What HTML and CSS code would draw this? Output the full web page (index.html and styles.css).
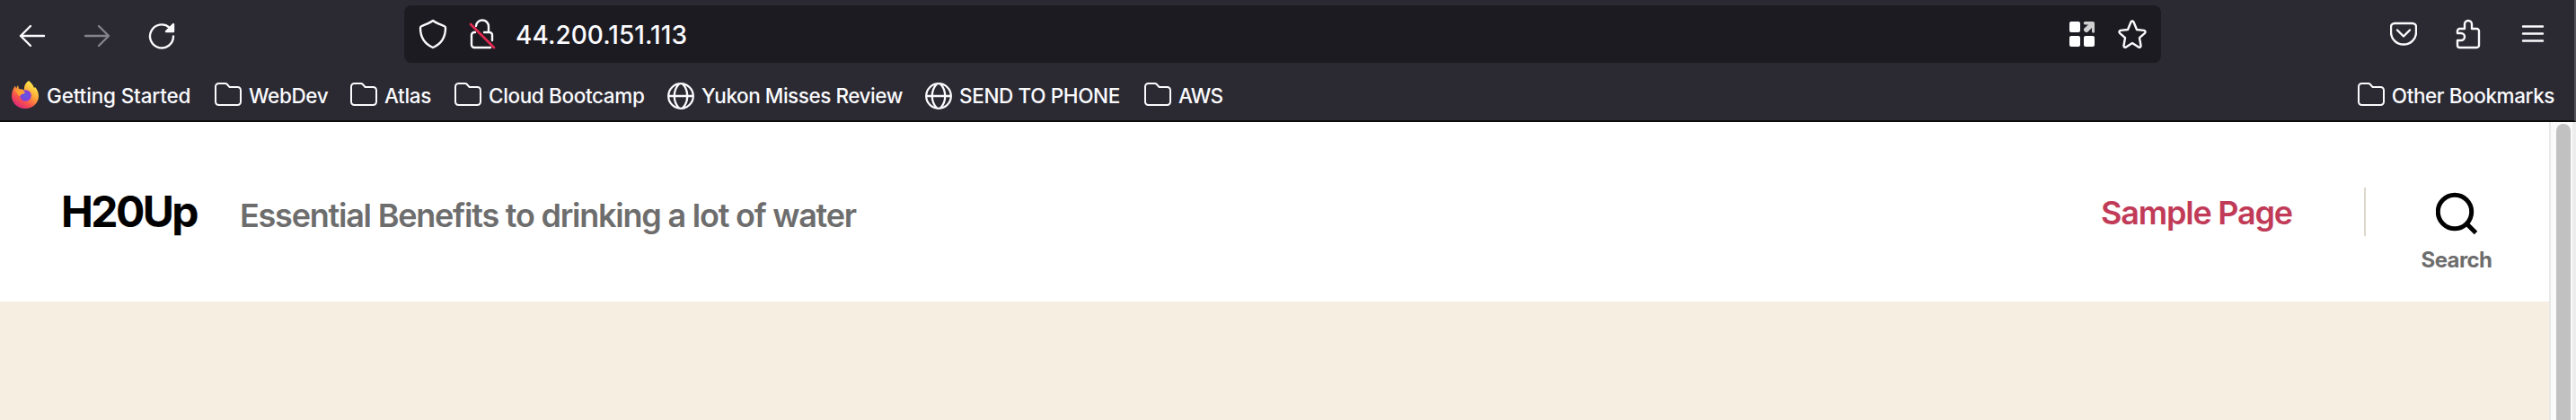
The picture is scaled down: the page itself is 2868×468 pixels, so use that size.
FILE: index.html
```html
<!DOCTYPE html>
<html lang="en">
<head>
<meta charset="utf-8">
<title>H20Up</title>
<link rel="stylesheet" href="styles.css">
</head>
<body>
<svg class="defs" width="0" height="0" aria-hidden="true">
  <symbol id="folder" viewBox="0 0 30 26"><path d="M1 4.500a3.500 3.500 0 0 1 3.500-3.500h7.200a3 3 0 0 1 2.200 1l2.600 3h9a3.500 3.500 0 0 1 3.500 3.500v13a3.500 3.500 0 0 1-3.500 3.500h-21A3.500 3.500 0 0 1 1 21.500z" fill="none" stroke="currentColor" stroke-width="2"/></symbol>
  <symbol id="globe" viewBox="0 0 30 30"><g fill="none" stroke="currentColor" stroke-width="2.300"><circle cx="15" cy="15" r="13.800"/><path d="M1 15h28M13 1.500C6 9 6 21 13 28.500M17 1.500C24 9 24 21 17 28.500"/></g></symbol>
</svg>
<header class="browser">
  <div class="toolbar">
    <nav class="history">
      <svg class="back" width="30" height="26" viewBox="0 0 30 26"><path d="M13 2 2 13l11 11M2 13h26" /></svg>
      <svg class="forward" width="30" height="26" viewBox="0 0 30 26"><path d="M17 2l11 11-11 11M28 13H2" /></svg>
      <svg class="reload" width="30" height="30" viewBox="0 0 30 30"><path d="M23.500 5.600A13 13 0 1 0 28 15.500"/><path d="M28 2v8H20z" fill="currentColor"/></svg>
    </nav>
    <div class="urlbar">
      <svg class="shield" width="32" height="34" viewBox="0 0 32 34"><path d="M16 2C12 5 7 6.500 3.500 8 2.500 8.500 2 9 2 10c0 8 2.500 17 14 22C27.500 27 30 18 30 10c0-1-.5-1.500-1.500-2C25 6.500 20 5 16 2z"/></svg>
      <svg class="lock" width="30" height="34" viewBox="0 0 30 34"><path d="M8 8a7 7 0 0 1 14 1v6M7 15H6a3 3 0 0 0-3 3v11a3 3 0 0 0 3 3h18M17 15h6a3 3 0 0 1 3 3v6"/><path class="slash" d="M2 6l26 26"/></svg>
      <span class="address">44.200.151.113</span>
      <svg class="grid" width="28" height="28" viewBox="0 0 28 28"><g fill="#fff"><rect width="12" height="12" rx="2"/><rect y="16" width="12" height="12" rx="2"/><rect x="16" y="16" width="12" height="12" rx="2"/></g><path fill="#cfcfcf" d="M17.500 0H26a2 2 0 0 1 2 2v8.500a1.500 1.500 0 0 1-3 1V7l-5 5h-2l-2-2V8l5-4.500h-3.500a1.700 1.700 0 0 1 0-3.500z"/></svg>
      <svg class="star" width="32" height="32" viewBox="0 0 32 32"><path d="M14.500 2.500q1.500-2 3 0l3.500 8.500 8 .9q2.500.8 1 2.900l-6 5.400 1.500 8.500q0 2.600-2.500 1.800L16 26l-7 4.500q-2.500.8-2.500-1.800L8 20.200 2 14.800q-1.500-2.100 1-2.900l8-.9z"/></svg>
    </div>
    <nav class="actions">
      <svg class="pocket" width="30" height="32" viewBox="0 0 30 32"><path d="M5 4h20a4 4 0 0 1 4 4v6a14 13.500 0 0 1-28 0V8a4 4 0 0 1 4-4z"/><path class="chevron" d="M8 11.500l7 7 7-7"/></svg>
      <svg class="puzzle" width="28" height="34" viewBox="0 0 28 34"><path d="M4.500 11H10V6a4 4 0 0 1 8 0v5h5.500a2.500 2.500 0 0 1 2.500 2.500v16a2.500 2.500 0 0 1-2.500 2.500h-19A2.500 2.500 0 0 1 2 29.500V24h4a4 4 0 0 0 0-8H2v-2.500A2.500 2.500 0 0 1 4.500 11z"/></svg>
      <svg class="menu" width="26" height="22" viewBox="0 0 26 22"><path d="M2 2.500h22M2 10.500h22M2 18.500h22"/></svg>
    </nav>
  </div>
  <nav class="bookmarks">
    <a class="bm firefox"><svg width="32" height="32" viewBox="0 0 32 32"><defs><linearGradient id="flame" x1=".85" y1=".1" x2=".25" y2="1"><stop offset="0" stop-color="#fff04f"/><stop offset=".4" stop-color="#ffa436"/><stop offset=".7" stop-color="#f8504d"/><stop offset="1" stop-color="#d9237f"/></linearGradient><radialGradient id="orb"><stop offset="0" stop-color="#5b5ce0"/><stop offset="1" stop-color="#8a3bdc"/></radialGradient></defs><path fill="url(#flame)" d="M20 1c3 2 5 5 6 8l1-1c2 2 4 6 4 10a15 14 0 0 1-30 0C1 13 3 9 5 6.500l1 3L8 6l1 4 6 1V8c1-4 3-6 5-7z"/><circle cx="16.500" cy="17.500" r="6.300" fill="url(#orb)"/><path fill="#ffa030" d="M5 11.500q6-2 10 1.500l1 1q-1 2-4 2-1 2-3 2z"/></svg><span>Getting Started</span></a>
    <a class="bm webdev"><svg class="folder"><use href="#folder"/></svg><span>WebDev</span></a>
    <a class="bm atlas"><svg class="folder"><use href="#folder"/></svg><span>Atlas</span></a>
    <a class="bm cloud"><svg class="folder"><use href="#folder"/></svg><span>Cloud Bootcamp</span></a>
    <a class="bm yukon"><svg class="globe"><use href="#globe"/></svg><span>Yukon Misses Review</span></a>
    <a class="bm phone"><svg class="globe"><use href="#globe"/></svg><span>SEND TO PHONE</span></a>
    <a class="bm aws"><svg class="folder"><use href="#folder"/></svg><span>AWS</span></a>
    <a class="bm other"><svg class="folder"><use href="#folder"/></svg><span>Other Bookmarks</span></a>
  </nav>
</header>
<div class="viewport">
  <main class="page">
    <header class="site-header">
      <h1 class="site-title">H20Up</h1>
      <p class="tagline">Essential Benefits to drinking a lot of water</p>
      <a class="sample">Sample Page</a>
      <div class="search">
        <svg width="46" height="50" viewBox="0 0 46 50"><circle cx="21" cy="23" r="18.700"/><path d="M34 36l10.500 10.500"/></svg>
        <span>Search</span>
      </div>
    </header>
  </main>
  <div class="scrollbar"><div class="thumb"></div></div>
</div>
</body>
</html>
```
FILE: styles.css
```css
* { box-sizing: border-box; }
body { margin: 0; height: 468px; overflow: hidden; display: flex; flex-direction: column; font-family: Inter, "Liberation Sans", sans-serif; background: #fff; }
.defs { position: absolute; }
svg { flex: none; display: block; }
.browser { height: 136px; flex: none; background: #2b2a33; color: #fbfbfe; border-bottom: 2px solid #0c0c0d; border-right: 2px solid #55545c; }
.toolbar { height: 76px; display: flex; align-items: center; }
.toolbar svg path { stroke: currentColor; stroke-width: 2.4; fill: none; stroke-linecap: round; stroke-linejoin: round; }
.history { width: 450px; display: flex; align-items: center; padding: 3px 0 0 21px; gap: 42px; }
.history .forward { color: #84838a; }
.toolbar .reload path:last-child { fill: currentColor; }
.urlbar { width: 1956px; height: 64px; border-radius: 8px; background: #1c1b22; display: flex; align-items: center; padding: 0 16px; }
.lock { margin-left: 24px; }
.toolbar .lock .slash { stroke: #e22850; stroke-width: 2.8; }
.address { flex: 1; margin-left: 22px; font-size: 28px; line-height: 34px; padding-top: 1px; letter-spacing: .05px; white-space: nowrap; font-weight: 500; }
.toolbar .grid path { fill: #cfcfcf; stroke: none; }
.star { margin-left: 26px; }
.actions { flex: 1; display: flex; align-items: center; padding-left: 255px; }
.puzzle { margin-left: 43px; }
.menu { margin-left: 45px; }
.bookmarks { height: 58px; display: flex; align-items: center; padding-left: 12px; font-size: 22.5px; letter-spacing: -.36px; font-weight: 500; }
.bm { display: flex; align-items: center; flex: none; height: 58px; white-space: nowrap; }
.bm span { margin-left: 8px; padding-top: 3px; }
.folder { width: 30px; height: 26px; }
.globe { width: 30px; height: 30px; margin-top: 4px; }
.firefox { width: 227px; letter-spacing: -.15px; }
.webdev { width: 151px; }
.atlas { width: 116px; }
.cloud { width: 237px; }
.yukon { width: 287px; letter-spacing: -.45px; }
.phone { width: 244px; }
.aws { letter-spacing: -.8px; }
.other { margin-left: auto; padding-right: 22px; letter-spacing: -.42px; }
.viewport { flex: 1; min-height: 0; display: flex; }
.page { flex: 1; background: #f5eee1; }
.site-header { height: 200px; background: #fff; display: flex; align-items: flex-start; padding-left: 68px; }
.site-title { margin: 70px 0 0; width: 199px; font-size: 48px; line-height: 60px; font-weight: 700; letter-spacing: -2.6px; white-space: nowrap; }
.tagline { margin: 80px 0 0; flex: 1; font-size: 36px; line-height: 48px; font-weight: 600; color: #6d6d6d; letter-spacing: -1.23px; white-space: nowrap; }
.sample { margin-top: 77px; width: 293px; font-size: 36px; line-height: 48px; font-weight: 600; color: #c13b58; letter-spacing: -1.2px; white-space: nowrap; }
.search { height: 54px; margin-top: 73px; width: 206px; padding-right: 2px; border-left: 2px solid #dcd7ca; display: flex; flex-direction: column; align-items: center; }
.search svg { margin-top: 4px; }
.search circle, .search path { fill: none; stroke: #000; stroke-width: 5; }
.search span { margin-top: 12px; font-size: 24px; line-height: 30px; font-weight: 700; color: #6d6d6d; letter-spacing: -.6px; }
.scrollbar { width: 30px; background: #fafafa; border-left: 2px solid #e8e8e8; border-right: 4px solid #ededed; padding: 2px 2px 0 6px; }
.thumb { width: 16px; height: 100%; border-radius: 8px 8px 0 0; background: #c1c1c1; }
```
